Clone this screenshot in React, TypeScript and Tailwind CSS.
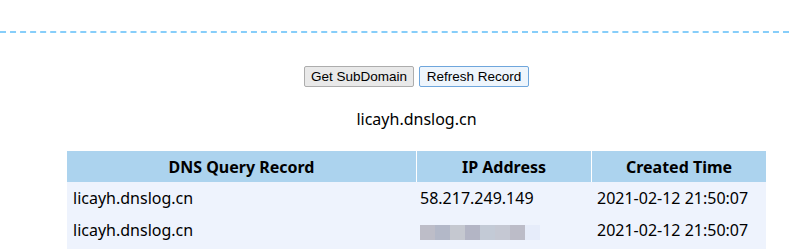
import React from 'react'

const rows = [
    { domain: 'licayh.dnslog.cn', ip: '58.217.249.149', time: '2021-02-12 21:50:07' },
    { domain: 'licayh.dnslog.cn', ip: '', time: '2021-02-12 21:50:07' },
]

const blur = ['bg-[#bdbdc8]', 'bg-[#b3b8c8]', 'bg-[#c5c8d0]', 'bg-[#b3b5c5]', 'bg-[#c3cad6]', 'bg-[#c5c8d3]', 'bg-[#bcbcc8]']

const App = () => {
    return (
        <div className="w-[789px] h-[249px] overflow-hidden bg-white font-['Noto_Sans',sans-serif] text-black">
            <div className="pt-[31px] border-b-2 border-dashed border-[#87cefa]"></div>
            <div className="ml-[67px] w-[699px] flex flex-col items-center">
                <div className="mt-[33px] flex gap-[5px] font-['Liberation_Sans',Arial,sans-serif] text-[13.5px]">
                    <button className="h-[21px] w-[110px] border border-[#adadad] bg-[#e9e9e9] rounded-[2px] leading-none">Get SubDomain</button>
                    <button className="h-[21px] w-[110px] border border-[#6fa6dc] bg-[#eef5fc] rounded-[2px] leading-none">Refresh Record</button>
                </div>
                <div className="mt-[20px] text-[16px] leading-[24px]">licayh.dnslog.cn</div>
            </div>
            <div className="ml-[67px] w-[699px] mt-[20px] text-[16px]">
                <div className="flex h-[31px] bg-[#acd3ee] font-bold">
                    <div className="w-[349px] flex items-center justify-center">DNS Query Record</div>
                    <div className="w-[175px] border-l border-white flex items-center justify-center">IP Address</div>
                    <div className="w-[175px] border-l border-white flex items-center justify-center">Created Time</div>
                </div>
                <div className="bg-[#eef3fd] pb-[6px]">
                    {rows.map((r, i) => (
                        <div key={i} className="flex h-[32px] items-center">
                            <div className="w-[350px] pl-[6px]">{r.domain}</div>
                            <div className="w-[175px] pl-[3px]">
                                {r.ip ? r.ip : (
                                    <div className="flex h-[15px] mt-[4px]">
                                        {blur.map((c, j) => <div key={j} className={`w-[15px] h-full ${c}`}></div>)}
                                        <div className="w-[15px] h-full bg-[#e6ecfa]"></div>
                                    </div>
                                )}
                            </div>
                            <div className="w-[174px] pl-[5px]">{r.time}</div>
                        </div>
                    ))}
                </div>
            </div>
        </div>
    )
}

export default App
